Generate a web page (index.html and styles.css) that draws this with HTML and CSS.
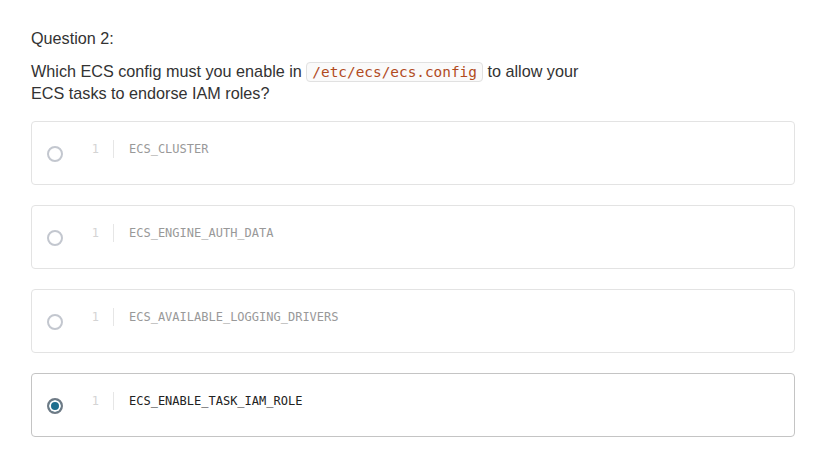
FILE: index.html
```html
<!DOCTYPE html>
<html>
<head>
<meta charset="utf-8">
<link rel="stylesheet" href="styles.css">
</head>
<body>
<div class="quiz">
  <p class="qtitle">Question 2:</p>
  <p class="qtext">Which ECS config must you enable in <code class="inline">/etc/ecs/ecs.config</code> to allow your<br>ECS tasks to endorse IAM roles?</p>
  <div class="options">
    <div class="option">
      <span class="radio"></span>
      <div class="code"><span class="ln">1</span><span class="src">ECS_CLUSTER</span></div>
    </div>
    <div class="option">
      <span class="radio"></span>
      <div class="code"><span class="ln">1</span><span class="src">ECS_ENGINE_AUTH_DATA</span></div>
    </div>
    <div class="option">
      <span class="radio"></span>
      <div class="code"><span class="ln">1</span><span class="src">ECS_AVAILABLE_LOGGING_DRIVERS</span></div>
    </div>
    <div class="option selected">
      <span class="radio"></span>
      <div class="code"><span class="ln">1</span><span class="src">ECS_ENABLE_TASK_IAM_ROLE</span></div>
    </div>
  </div>
</div>
</body>
</html>
```
FILE: styles.css
```css
html, body {
  margin: 0;
  padding: 0;
  background: #fff;
}
.quiz {
  padding: 26px 34px 0 31px;
  font-family: "Liberation Sans", Arial, sans-serif;
  color: #333;
  font-size: 16.2px;
}
.qtitle {
  margin: 0;
  line-height: 24px;
}
.qtext {
  margin: 11px 0 0;
  line-height: 21px;
}
.inline {
  font-family: "DejaVu Sans Mono", monospace;
  font-size: 14.4px;
  color: #b14a1d;
  background: #fafafa;
  border: 1px solid #e1e1e1;
  border-radius: 4px;
  padding: 1px 5px;
}
.options {
  margin-top: 17px;
  display: flex;
  flex-direction: column;
  gap: 20px;
}
.option {
  height: 62px;
  border: 1px solid #e3e3e3;
  border-radius: 4px;
  display: flex;
  align-items: center;
  padding-left: 15px;
}
.option.selected {
  border-color: #c4c4c4;
}
.radio {
  box-sizing: border-box;
  width: 16px;
  height: 16px;
  border-radius: 50%;
  border: 2px solid #c3c7cf;
  margin-top: 2px;
  flex: none;
}
.selected .radio {
  border: 2px solid #6e7a85;
  background: #1d6e8e;
  box-shadow: inset 0 0 0 2px #fff;
}
.code {
  display: flex;
  align-items: center;
  margin-left: 30px;
  font-family: "DejaVu Sans Mono", monospace;
  font-size: 12px;
  color: #999;
  margin-top: -9px;
}
.selected .code {
  color: #222;
}
.ln {
  color: #d4d4d4;
  width: 36px;
  box-sizing: border-box;
  padding-right: 14px;
  text-align: right;
  line-height: 18px;
  border-right: 1px solid #e6e6e6;
  margin-right: 15px;
  margin-left: -15px;
}
.src {
  line-height: 18px;
}
```
